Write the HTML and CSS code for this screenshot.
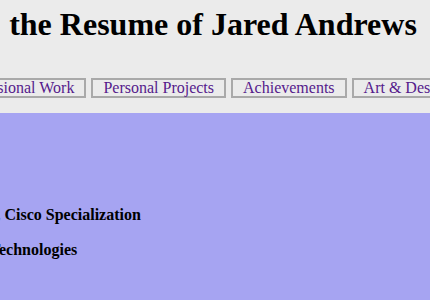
FILE: index.html
```html
<!DOCTYPE html>
<html lang="en">
<head>
    <meta charset="UTF-8">
    <title>the Resume of Jared Andrews</title>
    <link rel="stylesheet" href="styles.css">
</head>
<body>
<div class="page">
    <!--    标题-->
    <div class="header">
        <h1 class="title">the Resume of Jared Andrews</h1>
    </div>
    <!--    导航-->
    <div class="nav">
        <a href="#education" class="navBtn">Education</a>
        <a href="#work" class="navBtn">Professional Work</a>
        <a href="#projects" class="navBtn">Personal Projects</a>
        <a href="#achievements" class="navBtn">Achievements</a>
        <a href="#art" class="navBtn">Art &amp; Design</a>
        <a href="#contact" class="navBtn">Contact</a>
    </div>
    <!--    内容-->
    <div class="content" id="education">
        <h2 class="sectionTitle">Education</h2>
        <p class="item">Bachelor of Science in Network Engineering, Cisco Specialization</p>
        <p class="item">Associates of Applied Science, Information Technologies</p>
    </div>
</div>
</body>
</html>
```
FILE: styles.css
```css
body{
    margin: 0;
    background: #ebebeb;
    font-family: "Liberation Serif", "Times New Roman", serif;
    overflow: hidden;
}
.page{
    width: 1040px;
    margin-left: -307px;
}
/*标题*/
.header{
    text-align: center;
    padding-top: 6px;
}
.title{
    margin: 0;
    font-size: 32px;
    line-height: 36px;
}
/*导航*/
.nav{
    display: flex;
    justify-content: center;
    gap: 5px;
    margin-top: 36px;
    padding-right: 34px;
}
.navBtn{
    display: block;
    border: 2px solid #a9a9a9;
    padding: 0 10px;
    font-size: 16px;
    line-height: 16px;
    color: #551a8b;
    text-decoration: none;
}
/*内容*/
.content{
    background: #a6a4f2;
    margin-top: 15px;
    padding: 30px 0 60px 2px;
    height: 300px;
}
.sectionTitle{
    margin: 0;
    font-size: 20px;
    visibility: hidden;
}
.item{
    font-weight: bold;
    font-size: 16px;
    margin: 40px 0 0 0;
}
.item + .item{
    margin-top: 17px;
}
```
